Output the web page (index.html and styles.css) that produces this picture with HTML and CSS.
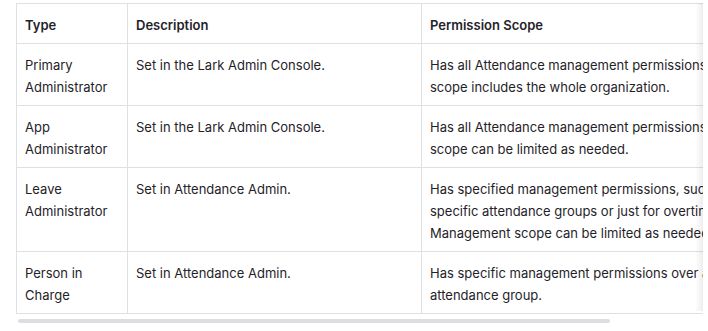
FILE: index.html
```html
<!DOCTYPE html>
<html lang="en">
<head>
<meta charset="utf-8">
<link rel="stylesheet" href="styles.css">
</head>
<body>
<div class="wrap">
  <div class="scroller">
    <table class="perm">
      <colgroup>
        <col class="c1"><col class="c2"><col class="c3">
      </colgroup>
      <thead>
        <tr><th>Type</th><th>Description</th><th>Permission Scope</th></tr>
      </thead>
      <tbody>
        <tr>
          <td>Primary Administrator</td>
          <td>Set in the Lark Admin Console.</td>
          <td>Has all Attendance management permissions. Management<br>scope includes the whole organization.</td>
        </tr>
        <tr>
          <td>App Administrator</td>
          <td>Set in the Lark Admin Console.</td>
          <td>Has all Attendance management permissions. Management<br>scope can be limited as needed.</td>
        </tr>
        <tr>
          <td>Leave Administrator</td>
          <td>Set in Attendance Admin.</td>
          <td>Has specified management permissions, such as for<br>specific attendance groups or just for overtime rules.<br>Management scope can be limited as needed.</td>
        </tr>
        <tr>
          <td>Person in Charge</td>
          <td>Set in Attendance Admin.</td>
          <td>Has specific management permissions over a specific<br>attendance group.</td>
        </tr>
      </tbody>
    </table>
  </div>
  <div class="shade"></div>
  <div class="thumb"></div>
</div>
</body>
</html>
```
FILE: styles.css
```css
html, body {
  margin: 0;
  padding: 0;
  background: #ffffff;
}
body {
  padding: 3px 5px 0 16px;
  font-family: Inter, "Noto Sans", "Liberation Sans", sans-serif;
  font-size: 13px;
  color: #1f2329;
}
.wrap {
  position: relative;
}
.scroller {
  overflow: hidden;
}
.perm {
  border-collapse: collapse;
  table-layout: fixed;
  width: 797px;
}
.c1 { width: 111px; }
.c2 { width: 294px; }
.c3 { width: 392px; }
.perm th, .perm td {
  border: 1px solid #dee0e3;
  padding: 10px 8px 7px 8px;
  text-align: left;
  vertical-align: top;
  line-height: 22px;
  white-space: normal;
}
.perm td:nth-child(3) {
  white-space: nowrap;
}
.perm th {
  font-weight: 600;
}
.perm td {
  font-weight: 400;
}
.shade {
  position: absolute;
  top: 0;
  right: 0;
  width: 8px;
  bottom: 12px;
  background: linear-gradient(to right, rgba(0,0,0,0), rgba(0,0,0,0.07));
  pointer-events: none;
}
.thumb {
  margin: 5px 0 0 2px;
  width: 592px;
  height: 4px;
  border-radius: 2px;
  background: #dcdee1;
}
```
